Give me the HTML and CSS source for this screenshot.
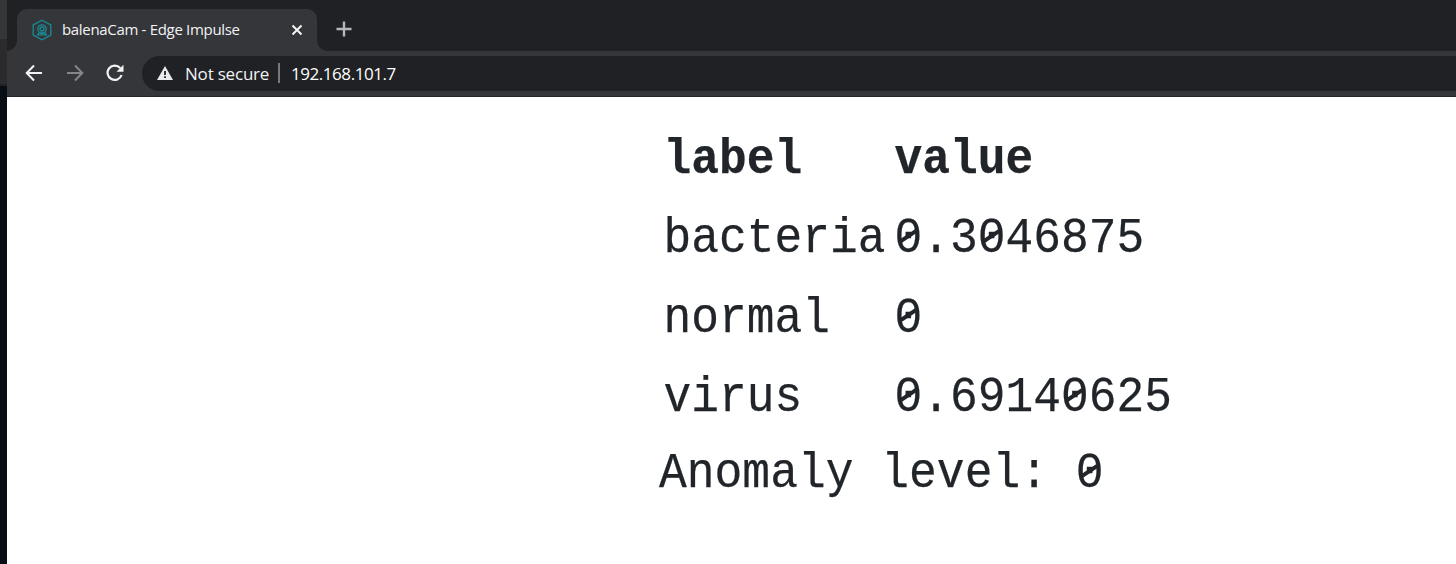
FILE: index.html
```html
<!DOCTYPE html>
<html lang="en">
<head>
<meta charset="utf-8">
<title>balenaCam - Edge Impulse</title>
<link rel="stylesheet" href="styles.css">
</head>
<body>
<div class="desktop"></div>
<div class="browser">
  <header class="tabs">
    <div class="tab">
      <svg class="favicon" width="20" height="22" viewBox="0 0 20 22" fill="none" stroke="#168d96" stroke-width="1.3"><path d="M10 1.2 18.8 6v10L10 20.8 1.2 16V6z"/><circle cx="10" cy="10" r="4.2"/><circle cx="10" cy="10" r="2" /><path d="m7.4 13.4-1.7 2.4h8.6l-1.7-2.4M8 14.1h4"/></svg>
      <span class="tab-title">balenaCam - Edge Impulse</span>
      <svg class="close" width="12" height="12" viewBox="0 0 12 12" stroke="#f4f4f4" stroke-width="2"><path d="m1.5 1.5 9 9m0-9-9 9"/></svg>
    </div>
    <svg class="plus" width="16" height="16" viewBox="0 0 16 16" stroke="#b4b7bb" stroke-width="2.4"><path d="M8 .5v15M.5 8h15"/></svg>
  </header>
  <nav class="toolbar">
    <svg class="arrow" width="18" height="18" viewBox="0 0 18 18" fill="none" stroke="#f1f3f4" stroke-width="2"><path d="M17 9H2m7-7.5L1.7 9 9 16.5"/></svg>
    <svg class="arrow forward" width="18" height="18" viewBox="0 0 18 18" fill="none" stroke="#85868a" stroke-width="2"><path d="M1 9h15M9 1.5 16.3 9 9 16.5"/></svg>
    <svg class="reload" width="18" height="18" viewBox="0 0 18 18"><path d="M15.6 11A7.2 7.2 0 1 1 14.2 4" fill="none" stroke="#f1f3f4" stroke-width="2.2"/><path d="M17.5.8v7h-7z" fill="#f1f3f4"/></svg>
    <div class="omnibox">
      <svg class="warning" width="16" height="14" viewBox="0 0 16 14"><path d="M8 0l8 14H0z" fill="#e8eaed"/><path d="M8 5v4m0 1.2v1.8" stroke="#202124" stroke-width="1.8"/></svg>
      <span class="security">Not secure</span>
      <span class="divider"></span>
      <span class="url">192.168.101.7</span>
    </div>
  </nav>
  <main class="page">
    <table class="results">
      <thead><tr><th>label</th><th>value</th></tr></thead>
      <tbody>
        <tr><td>bacteria</td><td><span class="zero">0</span>.3<span class="zero">0</span>46875</td></tr>
        <tr><td>normal</td><td><span class="zero">0</span></td></tr>
        <tr><td>virus</td><td><span class="zero">0</span>.6914<span class="zero">0</span>625</td></tr>
      </tbody>
    </table>
    <p class="anomaly">Anomaly level: <span class="zero">0</span></p>
  </main>
</div>
</body>
</html>
```
FILE: styles.css
```css
* { box-sizing: border-box; }
body { margin: 0; width: 1456px; height: 564px; display: flex; overflow: hidden; background: #fff; font-family: "Open Sans", "Noto Sans", sans-serif; }
svg { display: block; flex: none; }
.desktop { width: 7px; height: 564px; flex: none; background: linear-gradient(#343637 0 39px, #2b2b2e 39px 84px, #202124 84px 86px, #090d14 86px); }
.browser { flex: 1; min-width: 0; }
.tabs { height: 51px; background: #202124; padding: 9px 0 0 10px; display: flex; }
.tab { position: relative; width: 300px; height: 42px; padding: 0 14px 0 15px; display: flex; align-items: center; background: #35363a; border-radius: 10px 10px 0 0; color: #f1f3f4; }
.tab::before, .tab::after { content: ""; position: absolute; bottom: 0; width: 10px; height: 10px; }
.tab::before { left: -10px; background: radial-gradient(circle at 0 0, transparent 9.5px, #35363a 10px); }
.tab::after { right: -10px; background: radial-gradient(circle at 100% 0, transparent 9.5px, #35363a 10px); }
.tab-title { margin: 0 0 2px 10px; font-size: 15px; line-height: 20px; letter-spacing: -.32px; white-space: nowrap; }
.close { margin-left: auto; }
.plus { margin: 12px 0 0 19px; }
.toolbar { height: 46px; padding: 0 0 1px 18px; display: flex; align-items: center; background: #35363a; border-bottom: 1px solid #242528; }
.arrow.forward { margin-left: 23px; }
.reload { margin-left: 22px; }
.omnibox { flex: 1; height: 35px; margin-left: 18px; padding-left: 15px; display: flex; align-items: center; background: #202124; border-radius: 18px 0 0 18px; color: #f1f3f4; font-size: 17px; }
.security { margin-left: 12px; width: 93px; white-space: nowrap; letter-spacing: -.2px; }
.divider { width: 2px; height: 20px; background: #77787b; }
.url { margin-left: 11px; color: #fff; letter-spacing: -.45px; }
.page { padding: 23px 0 0 652px; color: #212529; font-family: "Liberation Mono", monospace; font-size: 50px; -webkit-text-stroke: .25px #212529; }
.results { transform: scaleX(.924); transform-origin: 0 0; border-collapse: collapse; table-layout: fixed; width: 650px; }
.results th, .results td { height: 79.5px; padding: 0 0 0 5px; text-align: left; line-height: 60px; white-space: nowrap; }
.results th:first-child { width: 250px; }
.anomaly { margin: -2px 0 0; line-height: 76px; white-space: nowrap; transform: scaleX(.926); transform-origin: 0 0; }
.zero { position: relative; }
.zero::after { content: ""; position: absolute; left: 5px; top: calc(50% - 5px); width: 20px; height: 4px; background: currentColor; transform: rotate(-32deg); }
```
